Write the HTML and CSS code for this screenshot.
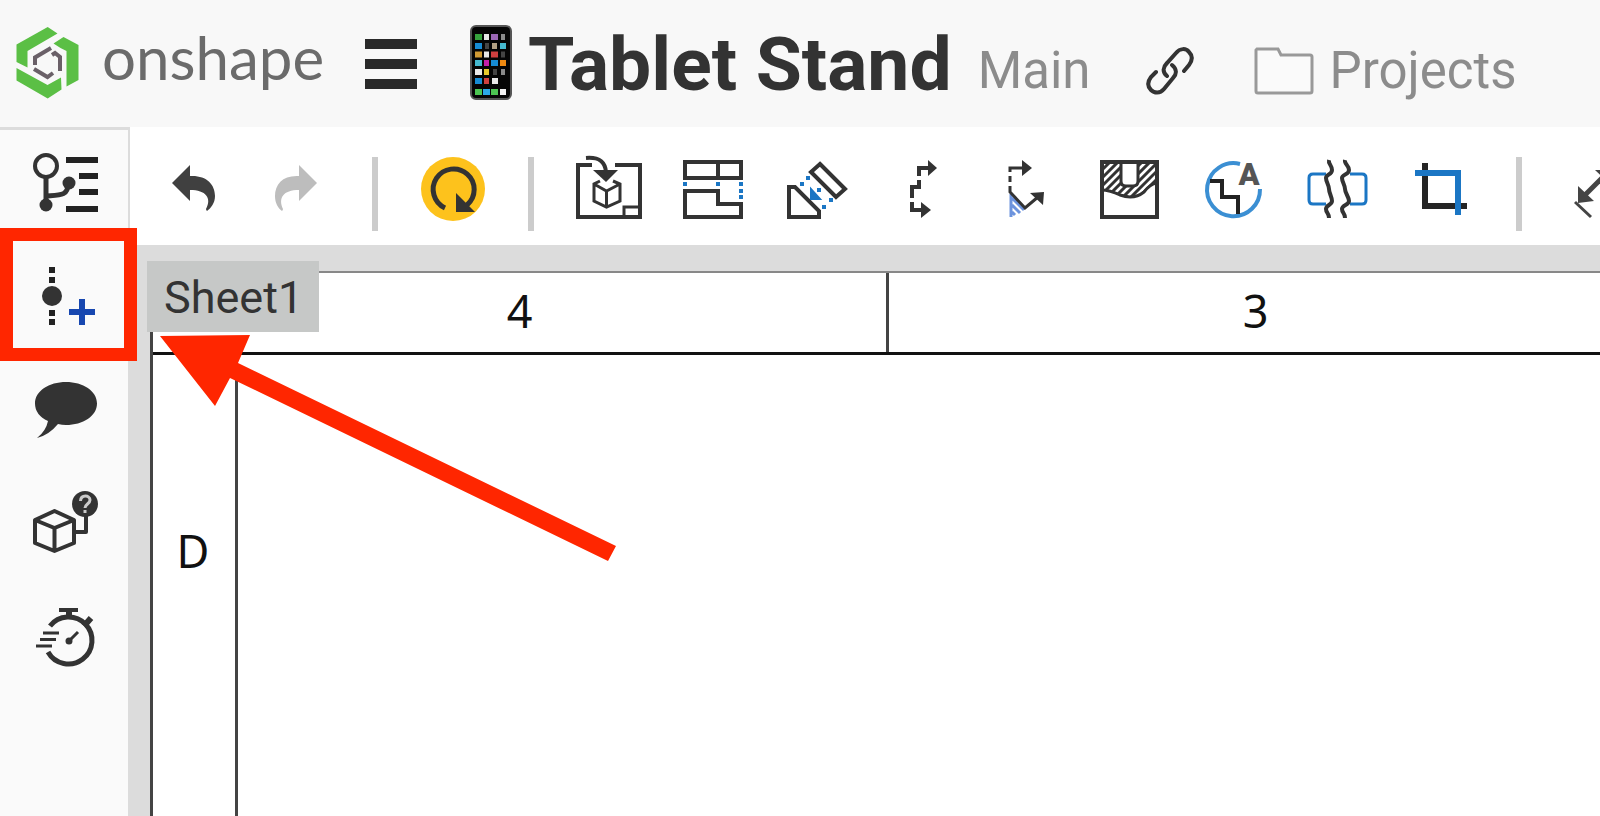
FILE: index.html
```html
<!DOCTYPE html>
<html lang="en">
<head>
    <meta charset="UTF-8">
    <meta name="viewport" content="width=device-width, initial-scale=1.0">
    <title>Tablet Stand</title>
    <link rel="stylesheet" href="styles.css">
</head>
<body>

    <header class="topbar">
        <a class="brand" href="#">
            <svg class="brand-mark" viewBox="16 26 64 72" aria-hidden="true">
                <g fill="#5bbf45">
                    <path d="M47.7 26 57.5 32.5 27.5 50V66.500L16.500 61V43.500Z"/>
                    <path d="M53.500 42.500 63.500 36 78.500 44V79L66.500 85.500V50L60.500 47Z"/>
                    <path d="M16.500 67 47.500 84 61 76.500 61.500 88.500 47.700 97.500 16.500 79.500Z"/>
                </g>
                <g fill="none" stroke="#6a6068" stroke-width="4">
                    <path d="M51 47 35 56.500V64"/>
                    <path d="M52 54 55 52 60 56V70"/>
                    <path d="M34 68 47.500 76 53 72"/>
                </g>
            </svg>
            <span class="brand-name">onshape</span>
        </a>

        <button class="menu-btn" aria-label="Menu">
            <svg viewBox="0 0 52 50"><path d="M0 0h52v10H0zM0 20h52v10H0zM0 40h52v10H0z" fill="#2a2a2a"/></svg>
        </button>

        <svg class="phone" viewBox="470 23 42 75" aria-hidden="true">
            <rect x="471" y="24" width="40" height="73" rx="5" fill="#050505" stroke="#555" stroke-width="2"/>
            <g stroke-width="6">
                <g stroke="#35a23c"><path d="M475 35h7"/></g>
                <g stroke="#e8e8e8"><path d="M484 35h5M484 52.500h5M492 79h6M475 70h7"/></g>
                <g stroke="#9b67b5"><path d="M491 35h7"/></g>
                <g stroke="#8a8a8a"><path d="M501 35h4M501 70h4"/></g>
                <g stroke="#168bd4"><path d="M475 44h7M491 61h7M475 79h7"/></g>
                <g stroke="#444"><path d="M485 44h4M501 52.500h4M493 70h4"/></g>
                <g stroke="#b3a184"><path d="M492 44h5"/></g>
                <g stroke="#45b9cf"><path d="M500 44h6M475 61h7"/></g>
                <g stroke="#d09a34"><path d="M475 52.500h7"/></g>
                <g stroke="#cf4040"><path d="M491 52.500h7M484 79h5"/></g>
                <g stroke="#c41fa8"><path d="M484 61h5"/></g>
                <g stroke="#f08a12"><path d="M500 61h6"/></g>
                <g stroke="#e5c92d"><path d="M484 70h5"/></g>
                <g stroke="#4cc552"><path d="M475 90h7M491 90h7"/></g>
                <g stroke="#2ba9e8"><path d="M483 90h7"/></g>
                <g stroke="#f2f2f2"><path d="M500 90h6"/></g>
            </g>
        </svg>
        <h1 class="doc-title">Tablet Stand</h1>

        <div class="location">
            <span>Main</span>
            <button class="link-btn" aria-label="Copy link">
                <svg viewBox="0 0 48 48" fill="none" stroke="#333" stroke-width="4" stroke-linecap="round">
                    <path d="M21 29C16 25 17 20 21 16L30 6C34 1 40 1 43 5C47 9 46 14 43 18L38 24"/>
                    <path d="M26 18C31 22 31 27 27 31L18 42C14 47 8 46 5 43C1 39 2 34 5 30L10 25"/>
                </svg>
            </button>
            <a class="folder" href="#">
                <svg viewBox="0 0 60 48" fill="#fafafa" stroke="#999" stroke-width="3">
                    <path d="M3 2H24L27 8H56Q58 8 58 10V44Q58 46 56 46H4Q2 46 2 44V3Z"/>
                </svg>
                Projects
            </a>
        </div>
    </header>

    <div class="workspace">
        <nav class="sidebar">
            <button class="side-btn" aria-label="Versions and history">
                <svg viewBox="0 130 128 112">
                    <g fill="none" stroke="#333">
                        <circle cx="46" cy="166" r="11" stroke-width="4"/>
                        <path d="M46 177V205M46 196C60 195 68 196 68 184" stroke-width="5"/>
                    </g>
                    <circle cx="46" cy="205" r="6.500" fill="#333"/>
                    <circle cx="69" cy="183" r="6.500" fill="#333"/>
                    <path d="M66 157h32v6H66zM79 173h19v6H79zM79 189h19v6H79zM66 206h32v6H66z" fill="#222"/>
                </svg>
            </button>
            <button class="side-btn" aria-label="Insert">
                <svg viewBox="0 242 128 112">
                    <path d="M49 267h6v6h-6zM49 277h6v6h-6zM49 310h6v6h-6zM49 319h6v6h-6z" fill="#222"/>
                    <circle cx="52" cy="296" r="10" fill="#333"/>
                    <path d="M82 299V325M69 312H95" stroke="#1747b0" stroke-width="6"/>
                </svg>
                <span class="highlight"></span>
            </button>
            <button class="side-btn" aria-label="Comments">
                <svg viewBox="0 354 128 112">
                    <path d="M66 382C83 382 97 391 97 403.500S83 425 66 425Q62 425 58 424Q49 435 37 438Q46 431 48 421Q35 415 35 403.500C35 391 49 382 66 382Z" fill="#333"/>
                </svg>
            </button>
            <button class="side-btn" aria-label="Configure parts">
                <svg viewBox="0 466 128 112">
                    <path d="M54.500 511 74 520V543L54.500 551 35 543V520ZM35 520 54.500 528 74 520M54.500 528V551M74 532H86V516" fill="none" stroke="#333" stroke-width="4" stroke-linejoin="round"/>
                    <circle cx="85" cy="504" r="13" fill="#333"/>
                    <path d="M80.500 501C81 494 90 495 90 500C90 504 85 504 85 508M85 510V513" fill="none" stroke="#ccc" stroke-width="3"/>
                </svg>
            </button>
            <button class="side-btn" aria-label="Performance">
                <svg viewBox="0 578 128 112" fill="none" stroke="#333">
                    <path d="M50 626A23.500 23.500 0 1 1 48 652" stroke-width="5"/>
                    <path d="M59 610H78" stroke-width="4"/>
                    <path d="M69 610V618M84 626 91 618" stroke-width="6"/>
                    <path d="M43 633H59M40 639.500H56M36 646H52" stroke-width="3"/>
                    <path d="M69 641 78 632" stroke-width="3"/>
                    <circle cx="69" cy="641" r="3.500" fill="#333" stroke="none"/>
                </svg>
            </button>
        </nav>

        <main class="main">
            <div class="toolbar">
                <button class="tool" aria-label="Undo">
                    <svg viewBox="141 127 104 118"><path d="M172 183 190 165V176C206 175 215 184 215 196C215 203 211 208 207 211Q206 210 206 209C212 198 206 190 190 190V201Z" fill="#404040"/></svg>
                </button>
                <button class="tool" aria-label="Redo" disabled>
                    <svg viewBox="245 127 104 118"><path d="M317 183 299 165V176C283 175 275 184 275 196C275 203 278 208 282 211Q283 210 283 209C278 198 283 190 299 190V201Z" fill="#bdbdbd"/></svg>
                </button>
                <span class="sep"></span>
                <button class="tool" aria-label="Update">
                    <svg viewBox="401 127 104 118">
                        <circle cx="453" cy="189" r="32" fill="#fdc21c"/>
                        <path d="M445 208A20.500 20.500 0 1 1 467 205" fill="none" stroke="#333" stroke-width="5"/>
                        <path d="M456 193V212H475Z" fill="#333"/>
                    </svg>
                </button>
                <span class="sep"></span>
                <button class="tool" aria-label="Insert view">
                    <svg viewBox="557 127 104 118" fill="none" stroke="#333" stroke-width="4">
                        <path d="M592 165H578V217H640V165H615" />
                        <path d="M640 207H624V217" stroke-width="3"/>
                        <path d="M586 158C599 157 605 161 606 172"/>
                        <path d="M593 170H618L606 182Z" fill="#333" stroke="none"/>
                        <path d="M600 181 594 184V201L606.500 207 620 201V184L613 181M594 184 606.500 191 620 184M606.500 191V207" stroke-width="3"/>
                    </svg>
                </button>
                <button class="tool" aria-label="Projected view">
                    <svg viewBox="661 127 104 118" fill="none" stroke="#333" stroke-width="4">
                        <path d="M685 162H741V178H685ZM718 162V178M685 191H718V204H741V217H685Z"/>
                        <path d="M683 184h4M716 184h4M739 184h4M739 191h4M739 197h4" stroke="#1b76c4"/>
                    </svg>
                </button>
                <button class="tool" aria-label="Auxiliary view">
                    <svg viewBox="765 127 104 118" fill="none" stroke="#333" stroke-width="4">
                        <path d="M789 187V217H819V211L795 187Z"/>
                        <path d="M820 164 845 189 836 197 811 172Z"/>
                        <path d="M806 178h4M800 184h4M829 200h4M822 207h4M817 190h4" stroke="#1b76c4"/>
                        <path d="M811 189V199H820Z" fill="#1b76c4" stroke="#1b76c4" stroke-width="2"/>
                    </svg>
                </button>
                <button class="tool" aria-label="Section view">
                    <svg viewBox="869 127 104 118" fill="none" stroke="#333" stroke-width="4">
                        <path d="M919 176V168H928M919 180V187H912V198M912 202V210H922"/>
                        <path d="M928 160 937 168 928 176ZM921 202 931 210 921 218Z" fill="#333" stroke="none"/>
                    </svg>
                </button>
                <button class="tool" aria-label="Aligned section view">
                    <svg viewBox="973 127 104 118" fill="none" stroke="#333" stroke-width="4">
                        <path d="M1011 194V217M1012 198 1024 210M1012 205 1020 213M1012 212 1015 215" stroke="#6c93dd" stroke-width="3"/>
                        <path d="M1010 172V168H1022M1010 176V182M1010 186V192L1025 208 1038 197" stroke-width="3"/>
                        <path d="M1022 160 1032 168 1022 176ZM1044 192 1030 193 1043 205Z" fill="#333" stroke="none"/>
                    </svg>
                </button>
                <button class="tool" aria-label="Broken-out section view">
                    <svg viewBox="1077 127 104 118" fill="none" stroke="#333" stroke-width="3">
                        <clipPath id="cut"><path d="M1101 161H1121V186H1138V161H1157V183Q1150 184 1144 192Q1134 200 1120 195Q1110 190 1101 190Z"/></clipPath>
                        <path clip-path="url(#cut)" d="M1090 182 1120 152M1090 190 1130 150M1090 198 1138 150M1098 198 1128 168M1106 198 1136 168M1114 198 1160 152M1122 198 1160 160M1130 198 1165 163M1138 198 1168 168M1130 174 1150 154"/>
                        <path d="M1121 161V181Q1121 186 1126 186H1133Q1138 186 1138 181V161M1101 190Q1110 190 1120 195Q1134 200 1144 192Q1150 184 1157 183"/>
                        <path d="M1102 162H1157V217H1102Z" stroke-width="4"/>
                    </svg>
                </button>
                <button class="tool" aria-label="Detail view">
                    <svg viewBox="1181 127 104 118" fill="none">
                        <path d="M1240 164A26.500 26.500 0 1 0 1260 189" stroke="#3b8fd3" stroke-width="4"/>
                        <path d="M1210 181H1222V197H1238V214" stroke="#222" stroke-width="4"/>
                        <text class="detail-letter" x="1249" y="185">A</text>
                    </svg>
                </button>
                <button class="tool" aria-label="Break view">
                    <svg viewBox="1285 127 104 118" fill="none">
                        <path d="M1326 174H1313Q1309 174 1309 178V200Q1309 204 1313 204H1326M1350 174H1362Q1366 174 1366 178V200Q1366 204 1362 204H1350" stroke="#1b76c4" stroke-width="3"/>
                        <path d="M1329 160C1328 164 1332 165 1332 170S1326 174 1326 178S1329 185 1329 189S1332 197 1332 201S1326 205 1326 209S1329 213 1329 218M1345 160C1344 164 1349 165 1349 170S1342 174 1342 178S1345 185 1345 189S1349 197 1349 201S1342 205 1342 209S1345 213 1345 218" stroke="#333" stroke-width="4"/>
                    </svg>
                </button>
                <button class="tool" aria-label="Crop view">
                    <svg viewBox="1389 127 104 118" fill="none" stroke-width="6">
                        <path d="M1425 163V206H1467" stroke="#252525"/>
                        <path d="M1415 173H1458V215" stroke="#1b76c4"/>
                    </svg>
                </button>
                <span class="sep"></span>
                <button class="tool" aria-label="Dimension">
                    <svg viewBox="1545 127 104 118" fill="none" stroke="#444">
                        <path d="M1582 198 1610 170" stroke-width="5"/>
                        <path d="M1578 186V203L1594 201ZM1595 170H1613V187Z" fill="#444" stroke="none"/>
                        <path d="M1575 202 1591 217" stroke-width="3"/>
                    </svg>
                </button>
            </div>

            <div class="canvas">
                <div class="sheet">
                    <div class="zones-top">
                        <span class="zone-col">4</span>
                        <span class="zone-col">3</span>
                    </div>
                    <div class="zones-left">
                        <span class="zone-row">D</span>
                    </div>
                </div>
                <div class="sheet-label">Sheet1</div>
            </div>
        </main>
    </div>

    <svg class="pointer" viewBox="0 0 460 230" aria-hidden="true">
        <path d="M0 1 90 0 78 28 456 211 448 226 70 43 55 71Z" fill="#ff2600"/>
    </svg>

</body>
</html>
```
FILE: styles.css
```css
* {
    box-sizing: border-box;
}

body {
    margin: 0;
    height: 100vh;
    display: flex;
    flex-direction: column;
    position: relative;
    overflow: hidden;
    font-family: Roboto, "Liberation Sans", sans-serif;
    background: #fff;
    color: #333;
}

button {
    padding: 0;
    border: none;
    background: none;
    cursor: pointer;
}

svg {
    display: block;
    flex-shrink: 0;
}

a {
    color: inherit;
    text-decoration: none;
}

/* top bar */
.topbar {
    display: flex;
    align-items: center;
    flex-shrink: 0;
    height: 127px;
    padding: 0 0 2px 16px;
    background: #f8f8f8;
    white-space: nowrap;
}

.brand {
    display: flex;
    align-items: center;
    gap: 22px;
    width: 349px;
    flex-shrink: 0;
}

.brand-mark {
    width: 64px;
    height: 72px;
}

.brand-name {
    padding-bottom: 12px;
    font-family: Lato, sans-serif;
    font-size: 60px;
    line-height: 72px;
    color: #6b6b6b;
}

.menu-btn {
    padding-top: 2px;
}

.menu-btn svg {
    width: 52px;
    height: 50px;
}

.phone {
    width: 42px;
    height: 75px;
    margin-left: 53px;
}

.doc-title {
    margin: 0 0 0 16px;
    padding-top: 2px;
    font-size: 75px;
    font-weight: 700;
}

.location {
    display: flex;
    align-items: center;
    padding-top: 16px;
    margin-left: 26px;
    font-size: 51px;
    color: #8c8c8c;
}

.link-btn {
    margin: 0 60px 0 56px;
}

.link-btn svg {
    width: 48px;
    height: 48px;
}

.folder {
    display: flex;
    align-items: center;
    gap: 15px;
}

.folder svg {
    width: 60px;
    height: 48px;
}

/* left panel */
.workspace {
    display: flex;
    flex: 1;
    min-height: 0;
}

.sidebar {
    display: flex;
    flex-direction: column;
    flex-shrink: 0;
    width: 130px;
    border-top: 3px solid #dcdcdc;
    border-right: 2px solid #dcdcdc;
    background: #fafafa;
}

.side-btn {
    position: relative;
    height: 112px;
}

.side-btn svg {
    width: 128px;
    height: 112px;
}

.highlight {
    position: absolute;
    z-index: 2;
    top: -14px;
    left: 0;
    width: 137px;
    height: 133px;
    border: 13px solid #ff2600;
}

/* drawing tools */
.main {
    display: flex;
    flex-direction: column;
    flex: 1;
    min-width: 0;
}

.toolbar {
    display: flex;
    align-items: center;
    flex-shrink: 0;
    height: 118px;
    padding-left: 11px;
    overflow: hidden;
    background: #fff;
}

.tool,
.tool svg {
    flex-shrink: 0;
    width: 104px;
    height: 118px;
}

.sep {
    flex-shrink: 0;
    width: 6px;
    height: 74px;
    margin: 16px 23px 0;
    background: #ccc;
}

.detail-letter {
    font-family: Roboto, sans-serif;
    font-size: 31px;
    font-weight: 900;
    text-anchor: middle;
    fill: #555;
}

/* sheet */
.canvas {
    position: relative;
    flex: 1;
    min-height: 0;
    padding: 26px 0 0 20px;
    overflow: hidden;
    background: #dcdcdc;
}

.sheet {
    display: flex;
    flex-direction: column;
    height: 100%;
    border-top: 2px solid #888;
    border-left: 3px solid #444;
    background: #fff;
    font-family: "Noto Sans", sans-serif;
    font-size: 45px;
    color: #111;
}

.zones-top {
    display: flex;
    flex-shrink: 0;
    height: 82px;
    overflow: hidden;
    border-bottom: 3px solid #111;
}

.zone-col {
    display: flex;
    align-items: center;
    justify-content: center;
    flex: 0 0 46vw;
    padding-bottom: 4px;
    border-right: 3px solid #444;
}

.zones-left {
    flex: 1;
    min-height: 0;
    width: 85px;
    overflow: hidden;
    border-right: 3px solid #444;
}

.zone-row {
    display: flex;
    align-items: center;
    justify-content: center;
    height: 390px;
    padding-right: 2px;
}

.sheet-label {
    position: absolute;
    top: 16px;
    left: 17px;
    padding: 2px 16px 0 17px;
    font-size: 45px;
    line-height: 69px;
    background: #c6c8c7;
}

/* red arrow over the sheet */
.pointer {
    position: absolute;
    top: 335px;
    left: 160px;
    width: 460px;
    height: 230px;
    pointer-events: none;
}
```
